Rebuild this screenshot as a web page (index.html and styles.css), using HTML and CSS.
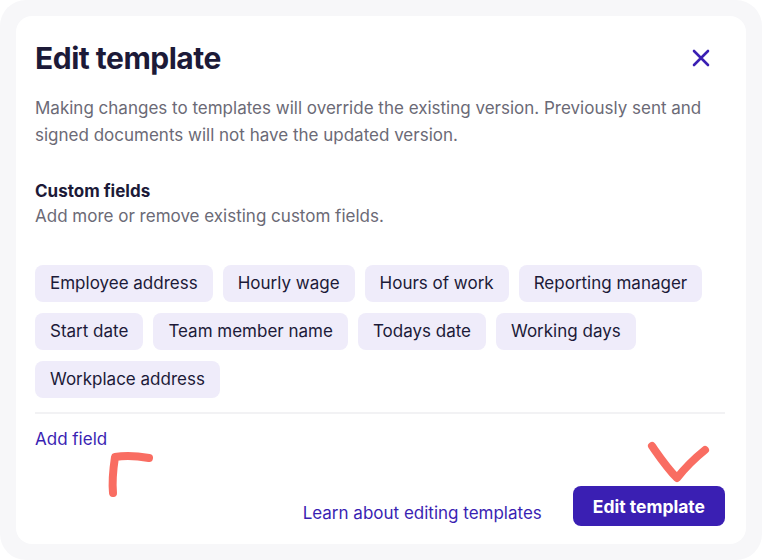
FILE: index.html
```html
<!DOCTYPE html>
<html lang="en">
  <head>
    <meta charset="UTF-8" />
    <title>Edit template</title>
    <link rel="stylesheet" href="styles.css">
  </head>
  <body>
    <div class="backdrop">
      <div class="modal">
        <div class="modal-header">
          <h1>Edit template</h1>
          <button class="close" aria-label="Close">
            <svg width="18" height="18" viewBox="0 0 18 18">
              <path d="M2 2 L16 16 M16 2 L2 16" stroke="#3a1fb3" stroke-width="2.6" stroke-linecap="round" fill="none" />
            </svg>
          </button>
        </div>

        <p class="intro">
          Making changes to templates will override the existing version. Previously sent and
          signed documents will not have the updated version.
        </p>

        <div class="section">
          <h2>Custom fields</h2>
          <p class="hint">Add more or remove existing custom fields.</p>
        </div>

        <div class="chips">
          <span class="chip">Employee address</span>
          <span class="chip">Hourly wage</span>
          <span class="chip">Hours of work</span>
          <span class="chip">Reporting manager</span>
          <span class="chip">Start date</span>
          <span class="chip">Team member name</span>
          <span class="chip">Todays date</span>
          <span class="chip">Working days</span>
          <span class="chip">Workplace address</span>
        </div>

        <div class="divider"></div>

        <a class="link add-field" href="#">Add field</a>

        <div class="footer">
          <a class="link" href="#">Learn about editing templates</a>
          <button class="primary">Edit template</button>
        </div>

        <!-- hand-drawn review marks -->
        <svg class="mark mark-corner" width="52" height="50" viewBox="0 0 52 50">
          <path d="M7 45 C6 34 7 22 9 9 C20 7 32 8 43 10" stroke="#f96d62" stroke-width="8" stroke-linecap="round" stroke-linejoin="round" fill="none" />
        </svg>
        <svg class="mark mark-check" width="66" height="46" viewBox="0 0 66 46">
          <path d="M6 6 C13 16 21 28 31 38 C39 28 49 18 59 10" stroke="#f96d62" stroke-width="8" stroke-linecap="round" stroke-linejoin="round" fill="none" />
        </svg>
      </div>
    </div>
  </body>
</html>
```

FILE: styles.css
```css
* {
  box-sizing: border-box;
}

body {
  margin: 0;
  background: #ffffff;
  font-family: Inter, 'Noto Sans', sans-serif;
  color: #1c1a38;
}

.backdrop {
  height: 560px;
  background: #f7f7f9;
  border-radius: 26px;
  padding: 16px;
}

.modal {
  position: relative;
  height: 528px;
  background: #ffffff;
  border-radius: 16px;
  padding: 22px 21px 0 19px;
}

.modal-header {
  display: flex;
  justify-content: space-between;
  align-items: center;
}

h1 {
  margin: 0;
  font-size: 30px;
  font-weight: 700;
  letter-spacing: -0.5px;
  line-height: 40px;
  color: #1c1a38;
}

.close {
  background: none;
  border: none;
  padding: 0;
  margin-right: 15px;
  width: 18px;
  height: 18px;
  cursor: pointer;
}

.intro {
  margin: 17px 0 0 0;
  font-size: 17px;
  line-height: 27px;
  color: #6b6a76;
}

.section {
  margin-top: 30px;
}

h2 {
  margin: 0;
  font-size: 17px;
  font-weight: 700;
  line-height: 24px;
  color: #1c1a38;
}

.hint {
  margin: 1px 0 0 0;
  font-size: 17px;
  line-height: 24px;
  color: #6b6a76;
}

.chips {
  display: flex;
  flex-wrap: wrap;
  gap: 11px 10px;
  margin-top: 37px;
}

.chip {
  background: #efecfa;
  border-radius: 8px;
  padding: 0 15px;
  height: 37px;
  line-height: 37px;
  font-size: 17px;
  color: #1c1a38;
}

.divider {
  height: 2px;
  background: #f2f2f4;
  margin-top: 14px;
}

.link {
  color: #3a1fb3;
  text-decoration: none;
  font-size: 17px;
}

.add-field {
  display: inline-block;
  margin-top: 15px;
}

.footer {
  display: flex;
  justify-content: flex-end;
  align-items: center;
  gap: 31px;
  margin-top: 37px;
}

.footer .link {
  margin-top: 13px;
}

.primary {
  background: #3a1fb3;
  color: #ffffff;
  border: none;
  border-radius: 8px;
  height: 40px;
  padding: 0 20px;
  font-family: inherit;
  font-size: 17.5px;
  font-weight: 700;
  cursor: pointer;
}

.mark {
  position: absolute;
}

.mark-corner {
  left: 90px;
  top: 432px;
}

.mark-check {
  left: 630px;
  top: 424px;
}
```
